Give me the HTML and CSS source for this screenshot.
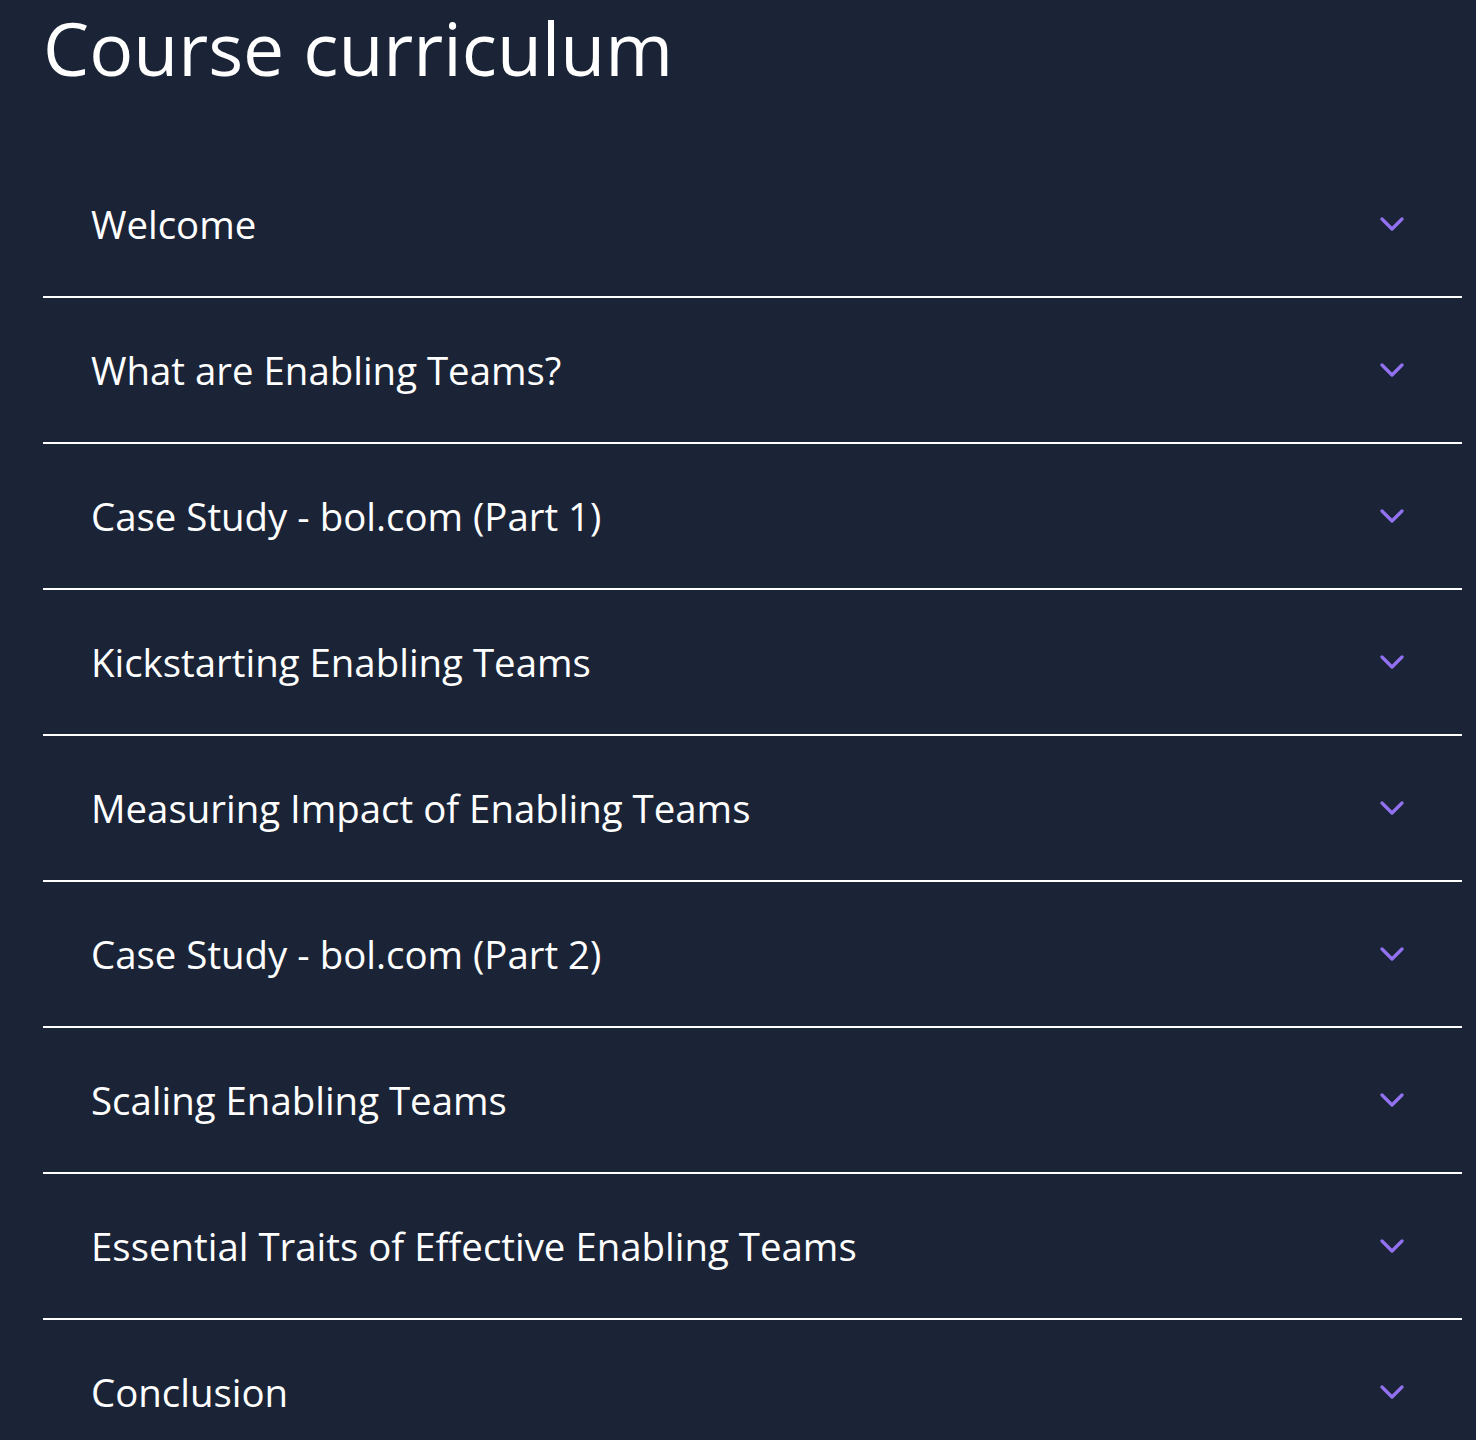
FILE: index.html
```html
<!DOCTYPE html>
<html lang="en">

<head>
    <meta charset="UTF-8" />
    <meta name="viewport" content="width=device-width, initial-scale=1.0" />
    <title>Course curriculum</title>
    <link rel="stylesheet" href="styles.css">
</head>

<body>

    <section class="curriculum">
        <h1 class="curriculum-title">Course curriculum</h1>

        <div class="accordion">
            <div class="accordion-item">
                <span class="item-title">Welcome</span>
                <svg class="chevron" viewBox="0 0 24 14"><path d="M2 2l10 10L22 2" /></svg>
            </div>
            <div class="accordion-item">
                <span class="item-title">What are Enabling Teams?</span>
                <svg class="chevron" viewBox="0 0 24 14"><path d="M2 2l10 10L22 2" /></svg>
            </div>
            <div class="accordion-item">
                <span class="item-title">Case Study - bol.com (Part 1)</span>
                <svg class="chevron" viewBox="0 0 24 14"><path d="M2 2l10 10L22 2" /></svg>
            </div>
            <div class="accordion-item">
                <span class="item-title">Kickstarting Enabling Teams</span>
                <svg class="chevron" viewBox="0 0 24 14"><path d="M2 2l10 10L22 2" /></svg>
            </div>
            <div class="accordion-item">
                <span class="item-title">Measuring Impact of Enabling Teams</span>
                <svg class="chevron" viewBox="0 0 24 14"><path d="M2 2l10 10L22 2" /></svg>
            </div>
            <div class="accordion-item">
                <span class="item-title">Case Study - bol.com (Part 2)</span>
                <svg class="chevron" viewBox="0 0 24 14"><path d="M2 2l10 10L22 2" /></svg>
            </div>
            <div class="accordion-item">
                <span class="item-title">Scaling Enabling Teams</span>
                <svg class="chevron" viewBox="0 0 24 14"><path d="M2 2l10 10L22 2" /></svg>
            </div>
            <div class="accordion-item">
                <span class="item-title">Essential Traits of Effective Enabling Teams</span>
                <svg class="chevron" viewBox="0 0 24 14"><path d="M2 2l10 10L22 2" /></svg>
            </div>
            <div class="accordion-item">
                <span class="item-title">Conclusion</span>
                <svg class="chevron" viewBox="0 0 24 14"><path d="M2 2l10 10L22 2" /></svg>
            </div>
        </div>
    </section>

</body>

</html>
```

FILE: styles.css
```css
* {
    box-sizing: border-box;
}

body {
    font-family: "Open Sans", Arial, sans-serif;
    margin: 0;
    background: #1b2437;
    color: #fff;
}

.curriculum {
    padding: 0 14px 0 43px;
}

.curriculum-title {
    margin: 0;
    padding-top: 6px;
    font-size: 73.3px;
    font-weight: 400;
    line-height: 84px;
}

.accordion {
    margin-top: 62px;
}

.accordion-item {
    display: flex;
    align-items: center;
    justify-content: space-between;
    height: 146px;
    padding: 0 58px 0 48px;
    border-bottom: 2px solid #fff;
}

.item-title {
    font-size: 38.4px;
    line-height: 52px;
}

.chevron {
    width: 24px;
    height: 14px;
    fill: none;
    stroke: #9272f2;
    stroke-width: 3.2;
    stroke-linecap: round;
    stroke-linejoin: round;
}
```
